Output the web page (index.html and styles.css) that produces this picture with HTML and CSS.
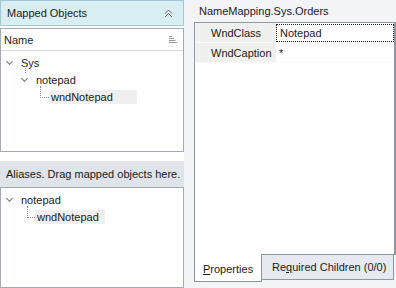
FILE: index.html
```html
<!DOCTYPE html>
<html lang="en">
<head>
    <meta charset="UTF-8">
    <title>Name Mapping</title>
    <link rel="stylesheet" href="styles.css">
</head>
<body>
    <div class="left">
        <div class="panel-head">
            <span>Mapped Objects</span>
            <svg class="collapse" width="9" height="9" viewBox="0 0 9 9"><path d="M1 4.5 L4.5 1 L8 4.5 M1 8 L4.5 4.5 L8 8" fill="none" stroke="#666" stroke-width="1"/></svg>
        </div>
        <div class="tree-box top-tree">
            <div class="col-head">
                <span>Name</span>
                <svg width="8" height="7" viewBox="0 0 8 7"><path d="M0 0.5h3M0 2.5h5M0 4.5h6.5M0 6.5h8" stroke="#999" stroke-width="1"/></svg>
            </div>
            <div class="tree">
                <div class="node lvl0"><span class="chev"></span><span class="label">Sys</span></div>
                <div class="node lvl1"><span class="vline v1"></span><span class="chev"></span><span class="label">notepad</span></div>
                <div class="node lvl2"><span class="elbow"></span><span class="label sel">wndNotepad</span></div>
            </div>
        </div>
        <div class="alias-bar">Aliases. Drag mapped objects here.</div>
        <div class="tree-box bottom-tree">
            <div class="tree">
                <div class="node lvl0"><span class="chev"></span><span class="label">notepad</span></div>
                <div class="node lvl1b"><span class="elbow"></span><span class="label sel">wndNotepad</span></div>
            </div>
        </div>
    </div>

    <div class="right">
        <div class="title">NameMapping.Sys.Orders</div>
        <div class="grid">
            <div class="row">
                <div class="prop">WndClass</div>
                <div class="val focus">Notepad</div>
            </div>
            <div class="row">
                <div class="prop">WndCaption</div>
                <div class="val">*</div>
            </div>
        </div>
        <div class="tabs">
            <div class="tab active"><u>P</u>roperties</div>
            <div class="tab req">Re<u>q</u>uired Children (0/0)</div>
        </div>
    </div>
</body>
</html>
```

FILE: styles.css
```css
body {
    margin: 0;
    width: 396px;
    height: 288px;
    display: flex;
    font-family: 'Liberation Sans', Arial, sans-serif;
    font-size: 11px;
    color: #1a1a1a;
    background-color: #f3f4f7;
    overflow: hidden;
}

.left {
    width: 184px;
    background-color: #fff;
    display: flex;
    flex-direction: column;
}

.panel-head {
    height: 26px;
    box-sizing: border-box;
    border: 1px solid #a3c8d2;
    background-color: #d9eef3;
    display: flex;
    align-items: center;
    justify-content: space-between;
    padding: 0 10px 0 6px;
    margin-bottom: 2px;
}

.tree-box {
    border: 1px solid #a4abb5;
    box-sizing: border-box;
    background-color: #fff;
}

.top-tree {
    height: 124px;
}

.col-head {
    height: 21px;
    display: flex;
    align-items: center;
    justify-content: space-between;
    padding: 0 6px 0 3px;
    border-bottom: 1px solid #d8d8d8;
}

.tree {
    position: relative;
    padding-top: 3px;
}

.node {
    position: relative;
    height: 17px;
    display: flex;
    align-items: center;
}

.lvl0 { padding-left: 4px; }
.lvl1 { padding-left: 19px; }
.lvl2 { padding-left: 39px; }
.lvl1b { padding-left: 26px; }

.chev {
    width: 10px;
    height: 10px;
    margin-right: 4px;
    position: relative;
}

.chev::before {
    content: "";
    position: absolute;
    left: 2px;
    top: 1px;
    width: 4px;
    height: 4px;
    border-right: 1px solid #777;
    border-bottom: 1px solid #777;
    transform: rotate(45deg);
}

.label {
    padding: 1px 2px;
}

.sel {
    background-color: #efefef;
    padding-right: 24px;
}

.lvl1b .sel {
    padding-right: 6px;
}

.vline {
    position: absolute;
    left: 24px;
    top: -5px;
    height: 7px;
    border-left: 1px dotted #888;
}

.elbow {
    width: 8px;
    height: 11px;
    margin-top: -9px;
    border-left: 1px dotted #888;
    border-bottom: 1px dotted #888;
}

.lvl1b .elbow {
    width: 7px;
}

.alias-bar {
    margin-top: 9px;
    height: 26px;
    background-color: #dfe3ea;
    display: flex;
    align-items: center;
    padding-left: 6px;
    white-space: nowrap;
}

.bottom-tree {
    flex: 1;
}

.right {
    flex: 1;
    display: flex;
    flex-direction: column;
    padding-left: 10px;
    padding-bottom: 7px;
}

.title {
    height: 22px;
    padding-left: 5px;
    display: flex;
    align-items: center;
}

.grid {
    flex: 1;
    background-color: #fff;
    border: 1px solid #8e97a6;
    border-right-width: 2px;
}

.row {
    display: flex;
    height: 19px;
    border-bottom: 1px solid #fafafa;
}

.prop {
    width: 81px;
    box-sizing: border-box;
    padding-left: 16px;
    background-color: #f0f0ef;
    display: flex;
    align-items: center;
}

.val {
    flex: 1;
    padding-left: 3px;
    display: flex;
    align-items: center;
}

.focus {
    border: 1px dotted #222;
    margin-top: 1px;
}

.tabs {
    display: flex;
    height: 27px;
    margin-top: -1px;
}

.tab {
    padding-left: 8px;
    display: flex;
    align-items: center;
    border: 1px solid #8e97a6;
    background-color: #e6eaf0;
    height: 26px;
    box-sizing: border-box;
    white-space: nowrap;
}

.tab.active {
    width: 68px;
    background-color: #fff;
    border-top: none;
    height: 28px;
    padding-top: 2px;
}

.tab.req {
    width: 132px;
    border-left: none;
    padding-left: 10px;
}

.tab u {
    text-decoration-thickness: 1px;
}
```
